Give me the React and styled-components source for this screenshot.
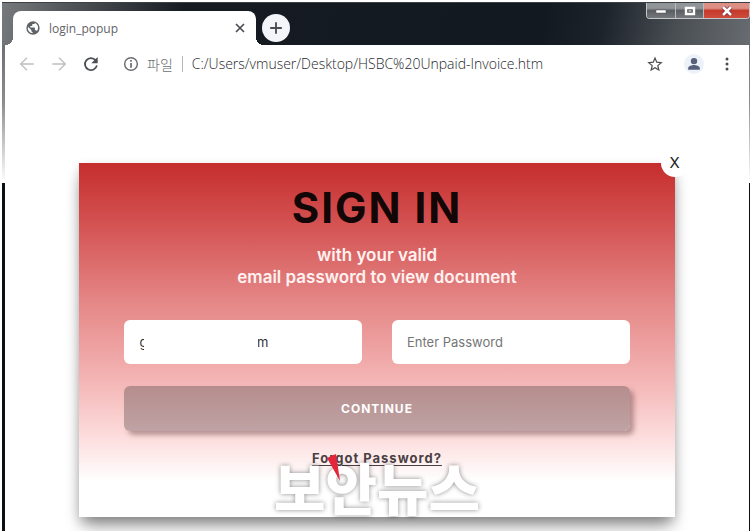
import React, { useState } from "react";
import styled, { createGlobalStyle } from "styled-components";

const GlobalStyle = createGlobalStyle`
  * {
    box-sizing: border-box;
  }
  body {
    margin: 0;
    background: #fff;
    font-family: "Open Sans", "Noto Sans CJK KR", sans-serif;
  }
  button {
    border: 0;
    padding: 0;
    background: none;
    font: inherit;
    cursor: pointer;
  }
`;

const Frame = styled.div`
  min-height: 100vh;
  display: flex;
  flex-direction: column;
  overflow: hidden;
  border-top: 2px solid #fff;
  border-left: 2px solid #fff;
  padding: 0 1px 0 3px;
  background: linear-gradient(#6c6f72 40px, #8a8c8e 100px, #fff 181px, #0c1014 181px);
`;

const TitleBar = styled.header`
  height: 43px;
  display: flex;
  margin: 0 -1px 0 -3px;
  padding-left: 11px;
  border-top: 1px solid #3c4146;
  background: linear-gradient(
    100deg,
    #777a7d 0,
    #54585c 60px,
    #161b22 180px,
    #131920 72%,
    #1c232a 80%,
    #4a4f54 90%,
    #686c70 100%
  );
`;

const Tab = styled.div`
  position: relative;
  align-self: flex-end;
  width: 33%;
  height: 34px;
  display: flex;
  align-items: center;
  padding: 0 10px 0 12px;
  border-radius: 8px 8px 0 0;
  background: #fff;
  color: #5f6368;
  font-size: 12px;

  &::before,
  &::after {
    content: "";
    position: absolute;
    bottom: 0;
    width: 8px;
    height: 8px;
  }
  &::before {
    right: 100%;
    background: radial-gradient(circle at 0 0, transparent 8px, #fff 8px);
  }
  &::after {
    left: 100%;
    background: radial-gradient(circle at 100% 0, transparent 8px, #fff 8px);
  }
`;

const TabTitle = styled.span`
  flex: 1;
  margin-left: 8px;
`;

const IconButton = styled.button`
  display: grid;
  place-items: center;
  color: ${(props) => props.$color || "#4a4d51"};
`;

const NewTab = styled(IconButton)`
  width: 28px;
  height: 28px;
  margin: 11px 0 0 6px;
  border-radius: 50%;
  background: #f3f5fb;
`;

const WindowControls = styled.div`
  display: flex;
  height: 16px;
  margin-left: auto;
  border: 1px solid #c5c8ca;
  border-top: 0;
  border-radius: 0 0 4px 4px;
  overflow: hidden;
`;

const WindowButton = styled.button`
  display: grid;
  place-items: center;
  width: ${(props) => (props.$close ? "46px" : "28px")};
  background: ${(props) =>
    props.$close
      ? "linear-gradient(#dd8f84 0 35%, #c43a2b 50%, #cf4c3c)"
      : "linear-gradient(#929598 0 35%, #5a5e62 50%, #74787b)"};

  & + & {
    border-left: 1px solid #b9bcbe;
  }
`;

const Toolbar = styled.nav`
  display: flex;
  align-items: center;
  height: 37px;
  padding: 0 20px 0 14px;
  background: #fff;
`;

const NavButtons = styled.div`
  display: flex;
  gap: 16px;
`;

const Address = styled.div`
  flex: 1;
  display: flex;
  align-items: center;
  margin-left: 24px;
  color: #6b6e72;
  font-size: 14px;
`;

const Scheme = styled.label`
  margin-left: 8px;
  padding-right: 9px;
  border-right: 1px solid #b5b7ba;
  font-family: "Noto Sans CJK KR", sans-serif;
  font-size: 14px;
  font-weight: 300;
  line-height: 16px;
`;

const Url = styled.input`
  flex: 1;
  min-width: 0;
  border: 0;
  padding: 0 0 0 9px;
  outline: 0;
  color: #25282b;
  font: 300 14px "Open Sans", sans-serif;
`;

const Tools = styled.div`
  display: flex;
  align-items: center;
  gap: 21px;
`;

const Profile = styled(IconButton)`
  width: 20px;
  height: 20px;
  border-radius: 50%;
  background: #edf1fa;
`;

const Page = styled.main`
  flex: 1;
  padding: 81px 10% 14px;
  background: #fff;
`;

const Popup = styled.section`
  position: relative;
  padding: 21px 45px 50px;
  text-align: center;
  font-family: "Inter", sans-serif;
  background: linear-gradient(
    #c62d2d,
    #d55656 19%,
    #e58686 39%,
    #f4b4b4 61%,
    #fddede 78%,
    #fff 90%
  );
  box-shadow:
    0 12px 16px -4px rgba(0, 0, 0, 0.42),
    0 4px 10px rgba(0, 0, 0, 0.16);
`;

const Close = styled.button`
  position: absolute;
  top: -14px;
  right: -14px;
  width: 28px;
  height: 28px;
  border-radius: 50%;
  background: #fff;
  color: #222;
  font-family: "Inter", sans-serif;
  font-size: 15px;
  line-height: 28px;
`;

const Heading = styled.h1`
  margin: 0;
  color: #120606;
  font-size: 42px;
  font-weight: 700;
  letter-spacing: 2px;
  line-height: 48px;
`;

const Lead = styled.p`
  margin: 12px 0 32px;
  color: #fff2f0;
  font-size: 17px;
  font-weight: 600;
  line-height: 22px;
`;

const Fields = styled.div`
  display: grid;
  grid-template-columns: 1fr 1fr;
  gap: 30px;
`;

const Field = styled.div`
  position: relative;
`;

const Input = styled.input`
  display: block;
  width: 100%;
  height: 44px;
  padding: 0 15px;
  border: 0;
  border-radius: 6px;
  outline: 0;
  background: #fff;
  color: #333;
  font-family: "Inter", sans-serif;
  font-size: 13px;

  &::placeholder {
    color: #757575;
    opacity: 1;
  }
`;

/* hides the middle of the address */
const Redaction = styled.span`
  position: absolute;
  top: 10px;
  bottom: 10px;
  left: 20px;
  width: 114px;
  background: #fff;
`;

const Submit = styled.button`
  display: block;
  width: 100%;
  height: 45px;
  margin: 22px 0 16px;
  border-radius: 6px;
  background: linear-gradient(#b68d8d, #bfa3a4);
  box-shadow: 4px 4px 5px rgba(120, 80, 80, 0.5);
  color: #fff;
  font-size: 12px;
  font-weight: 700;
  letter-spacing: 1px;
`;

const Forgot = styled.a`
  color: #4b3f43;
  font-size: 13px;
  font-weight: 700;
  letter-spacing: 1px;
  line-height: 16px;
  text-underline-offset: 2px;
`;

const Watermark = styled.div`
  position: absolute;
  right: 0;
  bottom: 3px;
  left: 0;
  color: #fff;
  font-family: "Noto Sans CJK KR", sans-serif;
  font-size: 56px;
  font-weight: 900;
  line-height: 56px;
  text-shadow: 0 0 5px rgba(0, 0, 0, 0.45);
  pointer-events: none;
`;

const Pointer = styled.svg`
  position: absolute;
  bottom: 36px;
  left: 248px;
`;

const Icon = ({ size = 16, box = 24, children }) => (
  <svg width={size} height={size} viewBox={`0 0 ${box} ${box}`} fill="currentColor" aria-hidden="true">
    {children}
  </svg>
);

const MASKED_EMAIL = "g" + "\u00a0".repeat(30) + "m";

export default function App() {
  const [url, setUrl] = useState("C:/Users/vmuser/Desktop/HSBC%20Unpaid-Invoice.htm");
  const [email, setEmail] = useState(MASKED_EMAIL);

  return (
    <Frame>
      <GlobalStyle />
      <TitleBar>
        <Tab>
          <Icon size={16}>
            <path d="M12 2a10 10 0 1 0 0 20 10 10 0 0 0 0-20zm0 17.8A7.8 7.8 0 0 1 4.4 10l5.1 5v1.3c0 1.2 1 2 2 2v1.5zm5.8-3.2c-.3-.8-1-1.3-1.9-1.3h-1v-3a1 1 0 0 0-1-1H8V9h2a1 1 0 0 0 1-1V6h2c1.2 0 2-.8 2-1.5 4.5 1.9 6.4 7.9 2.8 12.1z" />
          </Icon>
          <TabTitle>login_popup</TabTitle>
          <IconButton aria-label="Close tab">
            <Icon size={12}>
              <path d="M4 4l16 16M20 4L4 20" stroke="currentColor" strokeWidth="3.4" />
            </Icon>
          </IconButton>
        </Tab>
        <NewTab aria-label="New tab">
          <Icon size={14}>
            <path d="M12 2v20M2 12h20" stroke="currentColor" strokeWidth="3.2" />
          </Icon>
        </NewTab>
        <WindowControls>
          <WindowButton aria-label="Minimize">
            <svg width="12" height="6" viewBox="0 0 12 6">
              <path d="M1 2h10v3H1z" fill="#fff" stroke="#555" strokeWidth="0.5" />
            </svg>
          </WindowButton>
          <WindowButton aria-label="Maximize">
            <svg width="12" height="10" viewBox="0 0 12 10">
              <path d="M2 2h8v6H2z" fill="#555" stroke="#fff" strokeWidth="2.4" />
              <path d="M4.500 4.500h3v1h-3z" fill="#fff" />
            </svg>
          </WindowButton>
          <WindowButton $close aria-label="Close window">
            <svg width="12" height="10" viewBox="0 0 12 10">
              <path d="M2 1l8 8M10 1L2 9" stroke="#723" strokeWidth="4" />
              <path d="M2 1l8 8M10 1L2 9" stroke="#fff" strokeWidth="2.6" />
            </svg>
          </WindowButton>
        </WindowControls>
      </TitleBar>

      <Toolbar>
        <NavButtons>
          <IconButton $color="#bdbfc2" aria-label="Back">
            <Icon>
              <path d="M22 12H3M12 2.500L2.500 12l9.500 9.500" fill="none" stroke="currentColor" strokeWidth="2" />
            </Icon>
          </IconButton>
          <IconButton $color="#bdbfc2" aria-label="Forward">
            <Icon>
              <path d="M2 12h19M12 2.500l9.500 9.500-9.500 9.500" fill="none" stroke="currentColor" strokeWidth="2" />
            </Icon>
          </IconButton>
          <IconButton aria-label="Reload">
            <Icon>
              <path d="M19 6.500A9 9 0 1 0 20.800 14" fill="none" stroke="currentColor" strokeWidth="2.6" />
              <path d="M22 1.500v9.500h-9.500z" />
            </Icon>
          </IconButton>
        </NavButtons>
        <Address>
          <Icon>
            <circle cx="12" cy="12" r="9.5" fill="none" stroke="currentColor" strokeWidth="2.2" />
            <path d="M10.700 10.500h2.600v7h-2.600zM10.700 6h2.600v2.600h-2.600z" />
          </Icon>
          <Scheme htmlFor="url">파일</Scheme>
          <Url id="url" spellCheck={false} value={url} onChange={(e) => setUrl(e.target.value)} />
        </Address>
        <Tools>
          <IconButton aria-label="Bookmark">
            <Icon>
              <path
                d="M12 3l2.600 6.300 6.800.6-5.200 4.500 1.600 6.600-5.800-3.500L6.200 21l1.600-6.600L2.600 9.900l6.800-.6z"
                fill="none"
                stroke="currentColor"
                strokeWidth="1.8"
              />
            </Icon>
          </IconButton>
          <Profile $color="#566079" aria-label="Profile">
            <Icon size={14}>
              <circle cx="12" cy="7" r="5.5" />
              <path d="M2 22v-3c0-4 6.500-5.500 10-5.500S22 15 22 19v3z" />
            </Icon>
          </Profile>
          <IconButton aria-label="Menu">
            <svg width="4" height="14" viewBox="0 0 4 14" fill="currentColor">
              <circle cx="2" cy="2" r="1.5" />
              <circle cx="2" cy="7" r="1.5" />
              <circle cx="2" cy="12" r="1.5" />
            </svg>
          </IconButton>
        </Tools>
      </Toolbar>

      <Page>
        <Popup>
          <Close aria-label="Close">X</Close>
          <Heading>SIGN IN</Heading>
          <Lead>
            with your valid
            <br />
            email password to view document
          </Lead>
          <form onSubmit={(e) => e.preventDefault()}>
            <Fields>
              <Field>
                <Input aria-label="Email" value={email} onChange={(e) => setEmail(e.target.value)} />
                <Redaction />
              </Field>
              <Field>
                <Input type="password" aria-label="Password" placeholder="Enter Password" />
              </Field>
            </Fields>
            <Submit type="submit">CONTINUE</Submit>
          </form>
          <Forgot href="#forgot">Forgot Password?</Forgot>
          <Watermark>보안뉴스</Watermark>
          <Pointer width="14" height="27" viewBox="0 0 14 27" aria-hidden="true">
            <path d="M0 4L9 0l4 27z" fill="#e3263a" />
          </Pointer>
        </Popup>
      </Page>
    </Frame>
  );
}
